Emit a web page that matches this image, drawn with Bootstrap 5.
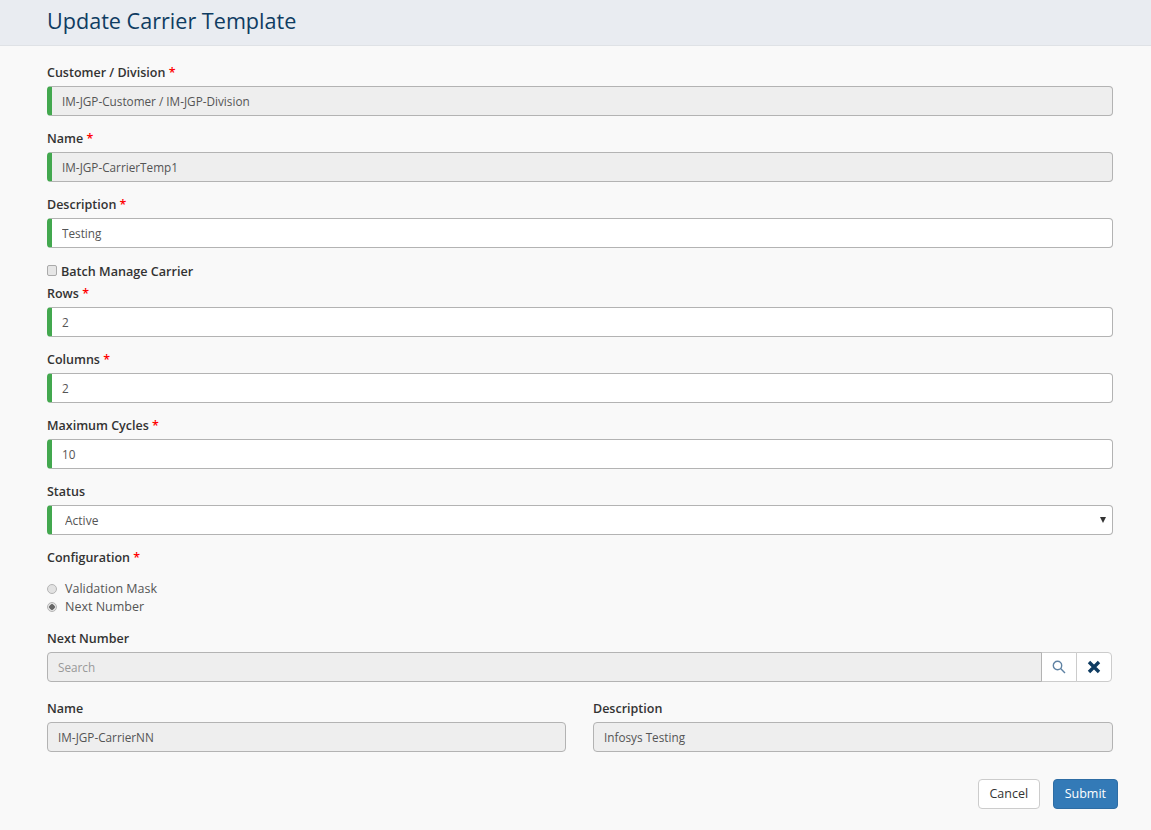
<!DOCTYPE html>
<html lang="en">
<head>
  <meta charset="UTF-8">
  <title>Update Carrier Template</title>
  <link href="https://cdn.jsdelivr.net/npm/bootstrap@5.3.2/dist/css/bootstrap.min.css" rel="stylesheet">
  <style>
    html, body { height: 100%; }
    body { background: #f9f9f9; font-family: "Open Sans", "Liberation Sans", sans-serif; font-size: 12px; color: #333; overflow: hidden; }
    .page-head { height: 46px; background: #e9ecf1; border-bottom: 1px solid #dfe2e6; padding-left: 47px; }
    .page-head h1 { font-size: 21.6px; line-height: 42px; margin: 0; color: #0f3c62; font-weight: 400; }
    .form-wrap { width: 1066px; margin-left: 47px; padding-top: 18px; }
    .fld { margin-bottom: 14px; }
    .fld-label { display: block; font-size: 12.5px; font-weight: 600; line-height: 18px; padding-bottom: 4px; margin: 0; color: #333; }
    .req { color: #f00; }
    .fld .form-control, .fld .form-select { height: 30px; font-size: 11.75px; padding: 0 10px; border: 1px solid #b3b3b3; border-radius: 4px; color: #555; box-shadow: none; }
    .fld .form-control:disabled { background: #eee; opacity: 1; }
    .fld .form-control::placeholder { color: #999; }
    .bar-green { border-left: 5px solid #43a84f !important; }
    .fld .form-select { font-size: 12px; padding: 1px 0 0 13px; background-size: 6px 6px; background-position: right 6px center;
      background-image: url("data:image/svg+xml,%3csvg xmlns='http://www.w3.org/2000/svg' viewBox='0 0 6 6'%3e%3cpath fill='%23333' d='M0 0h6L3 6z'/%3e%3c/svg%3e"); }
    .batch-line { display: flex; align-items: center; gap: 4px; height: 19px; padding-top: 1px; margin-bottom: 4px; font-size: 12.6px; font-weight: 600; }
    .batch-line input { appearance: none; width: 10px; height: 11px; margin: 0 0 3px; background: #e6e6e6; border: 1px solid #aaa; border-radius: 2px; }
    .radio-stack { padding-top: 9px; margin-bottom: 14px; }
    .radio-line { display: flex; align-items: center; gap: 8px; height: 18px; font-size: 12.5px; color: #555; }
    .radio-line input { appearance: none; width: 10px; height: 10px; margin: 0; background: #e2e2e2; border: 1px solid #b5b5b5; border-radius: 50%; }
    .radio-line input:checked { background: radial-gradient(circle, #666 0 2.5px, #e2e2e2 3px); }
    .search-box { width: 1065px; margin-bottom: 18px; }
    .fld .input-group-text { width: 36px; height: 30px; padding: 0; justify-content: center; background: #fff; border: 1px solid #ccc; border-radius: 4px; }
    .fld .input-group-text:not(:last-child) { border-radius: 0; }
    .search-box .form-control { border-radius: 4px 0 0 4px; }
    .bottom-row { display: grid; grid-template-columns: 519px 520px; column-gap: 27px; }
    .btn-row { width: 1071px; margin-top: 13px; column-gap: 13px; }
    .btn-row .btn { height: 30px; font-size: 12.5px; padding: 1px 10.5px 0; border-radius: 4px; }
    .btn-row .btn-submit { padding: 1px 11px 0; }
    .btn-cancel { background: #fff; border: 1px solid #ccc; color: #333; }
    .btn-submit { background: #337ab7; border: 1px solid #2e6da4; color: #fff; }
  </style>
</head>
<body>
  <div class="page-head">
    <h1>Update Carrier Template</h1>
  </div>

  <form class="form-wrap">
    <div class="fld">
      <label class="fld-label">Customer / Division <span class="req">*</span></label>
      <input type="text" class="form-control bar-green" value="IM-JGP-Customer / IM-JGP-Division" disabled>
    </div>
    <div class="fld">
      <label class="fld-label">Name <span class="req">*</span></label>
      <input type="text" class="form-control bar-green" value="IM-JGP-CarrierTemp1" disabled>
    </div>
    <div class="fld">
      <label class="fld-label">Description <span class="req">*</span></label>
      <input type="text" class="form-control bar-green" value="Testing">
    </div>
    <div class="batch-line">
      <input type="checkbox" id="batch">
      <label for="batch">Batch Manage Carrier</label>
    </div>
    <div class="fld">
      <label class="fld-label">Rows <span class="req">*</span></label>
      <input type="text" class="form-control bar-green" value="2">
    </div>
    <div class="fld">
      <label class="fld-label">Columns <span class="req">*</span></label>
      <input type="text" class="form-control bar-green" value="2">
    </div>
    <div class="fld">
      <label class="fld-label">Maximum Cycles <span class="req">*</span></label>
      <input type="text" class="form-control bar-green" value="10">
    </div>
    <div class="fld">
      <label class="fld-label">Status</label>
      <select class="form-select bar-green">
        <option>Active</option>
      </select>
    </div>
    <label class="fld-label">Configuration <span class="req">*</span></label>
    <div class="radio-stack">
      <div class="radio-line"><input type="radio" name="cfg" id="cfgMask"><label for="cfgMask">Validation Mask</label></div>
      <div class="radio-line"><input type="radio" name="cfg" id="cfgNext" checked><label for="cfgNext">Next Number</label></div>
    </div>
    <div class="fld search-box">
      <label class="fld-label">Next Number</label>
      <div class="input-group">
        <input type="text" class="form-control" placeholder="Search" disabled>
        <span class="input-group-text">
          <svg width="14" height="14" viewBox="0 0 14 14" fill="none" stroke="#5f82a3" stroke-width="1.4"><circle cx="5.5" cy="5.5" r="4.2"/><path d="M8.6 8.6 13 13"/></svg>
        </span>
        <span class="input-group-text">
          <svg width="14" height="14" viewBox="0 0 14 14" fill="none" stroke="#0f3c62" stroke-width="3.4"><path d="M2 2l10 10M12 2 2 12"/></svg>
        </span>
      </div>
    </div>
    <div class="bottom-row">
      <div class="fld">
        <label class="fld-label">Name</label>
        <input type="text" class="form-control" value="IM-JGP-CarrierNN" disabled>
      </div>
      <div class="fld">
        <label class="fld-label">Description</label>
        <input type="text" class="form-control" value="Infosys Testing" disabled>
      </div>
    </div>
    <div class="btn-row d-flex justify-content-end">
      <button type="button" class="btn btn-cancel">Cancel</button>
      <button type="button" class="btn btn-submit">Submit</button>
    </div>
  </form>

  <script src="https://cdn.jsdelivr.net/npm/bootstrap@5.3.2/dist/js/bootstrap.bundle.min.js"></script>
</body>
</html>
